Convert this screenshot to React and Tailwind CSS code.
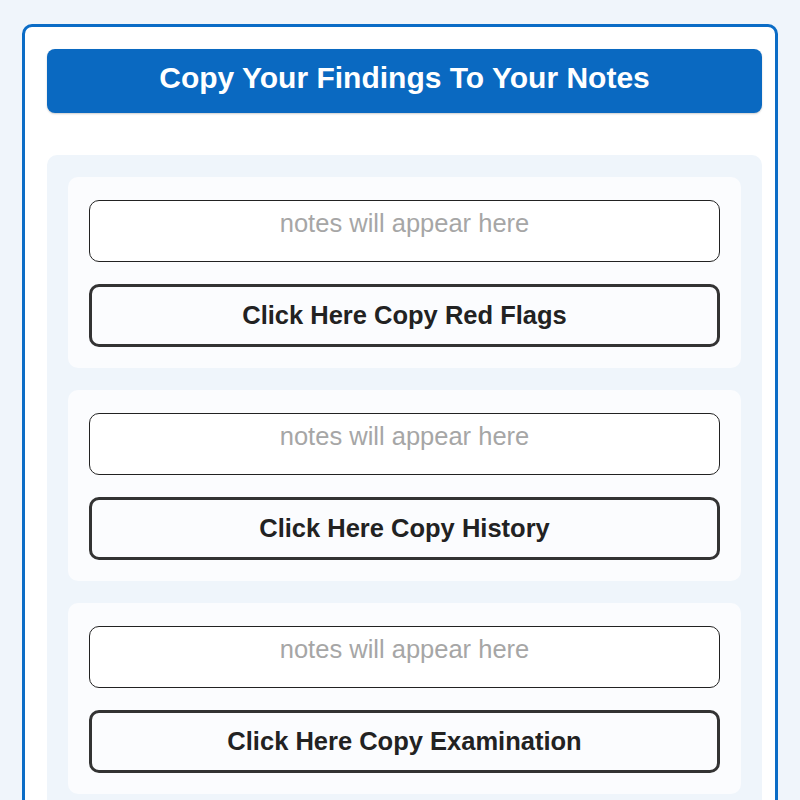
import React from 'react';

const sections = ['Red Flags', 'History', 'Examination'];

const NoteBlock = ({ label }) => (
  <div className="bg-[#fbfcfe] rounded-[10px] px-[21px] pt-[23px] pb-[21px] flex flex-col gap-[22px]">
    <div className="h-[62px] border-[1.5px] border-[#222] rounded-[10px] bg-white text-center pt-[8px] text-[25.5px] leading-[29px] text-[#a6a6a6]">
      notes will appear here
    </div>
    <button className="h-[63px] border-[3px] border-[#333] rounded-[10px] bg-[#fbfcfe] text-[25.5px] font-bold text-[#222]">
      Click Here Copy {label}
    </button>
  </div>
);

const App = () => {
  return (
    <div className="bg-[#f0f5fb] pl-[22px] pr-[22px] pt-[24px] font-['Liberation_Sans',Arial,sans-serif] overflow-hidden h-[800px]">
      <div className="bg-white border-[3px] border-[#0b6cc6] rounded-[10px] pl-[22px] pr-[13px] pt-[22px] h-[820px]">
        <div className="h-[64px] bg-[#0a69c1] rounded-[8px] flex items-center justify-center pb-[8px] shadow-[0_1px_2px_rgba(0,0,0,0.2)]">
          <h1 className="text-white text-[30px] font-bold">Copy Your Findings To Your Notes</h1>
        </div>
        <div className="mt-[42px] bg-[#eff5fb] rounded-[10px] px-[21px] pt-[22px] flex flex-col gap-[22px] h-[700px]">
          {sections.map((s) => (
            <NoteBlock key={s} label={s} />
          ))}
        </div>
      </div>
    </div>
  );
};

export default App;
